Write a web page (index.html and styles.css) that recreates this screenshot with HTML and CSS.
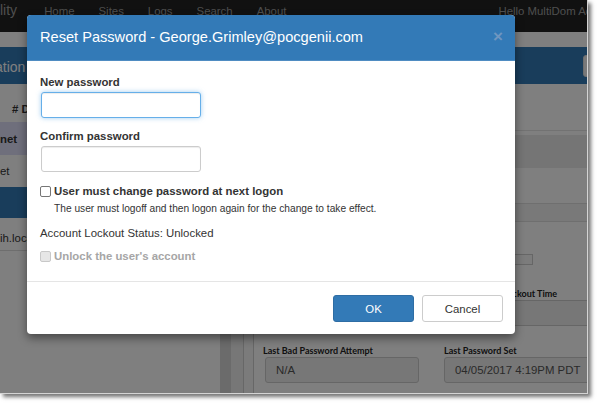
FILE: index.html
```html
<!DOCTYPE html>
<html lang="en">
<head>
<meta charset="utf-8">
<title>Reset Password</title>
<link rel="stylesheet" href="styles.css">
</head>
<body>
<div class="screen">
  <div class="app">
    <nav class="navbar">
      <span class="brand">lity</span>
      <a class="nav-link">Home</a>
      <a class="nav-link">Sites</a>
      <a class="nav-link">Logs</a>
      <a class="nav-link">Search</a>
      <a class="nav-link">About</a>
      <span class="hello">Hello MultiDom Admin</span>
    </nav>
    <div class="subbar"></div>
    <div class="band">
      <span class="band-title">ation</span>
      <span class="band-btn"></span>
    </div>
    <div class="main">
      <div class="list">
        <div class="list-head"># Domain</div>
        <div class="row row-hover">net</div>
        <div class="row row-plain">et</div>
        <div class="row row-active"></div>
        <div class="row row-last">ih.local</div>
      </div>
      <div class="stripe stripe-a"></div>
      <div class="stripe stripe-b"></div>
      <div class="stripe stripe-c"></div>
      <div class="panel">
        <div class="panel-top"></div>
        <div class="panel-band"></div>
        <div class="panel-sec"></div>
        <div class="panel-sub"></div>
        <div class="grid3 grid-small">
          <div></div><div></div><div class="mini-box"></div>
        </div>
        <div class="grid3 grid-lock">
          <div></div><div></div>
          <div class="field"><span class="flabel">Lockout Time</span><div class="fbox"></div></div>
        </div>
        <div class="grid2">
          <div class="field"><span class="flabel">Last Bad Password Attempt</span><div class="fbox fbox-a">N/A</div></div>
          <div class="field"><span class="flabel">Last Password Set</span><div class="fbox">04/05/2017 4:19PM PDT</div></div>
        </div>
      </div>
    </div>
  </div>

  <div class="backdrop"></div>

  <div class="modal">
    <div class="modal-header">
      <h4 class="modal-title">Reset Password - George.Grimley@pocgenii.com</h4>
      <span class="close">×</span>
    </div>
    <div class="modal-body">
      <div class="form-group">
        <label class="label">New password</label>
        <input class="input input-focus" type="password">
      </div>
      <div class="form-group">
        <label class="label">Confirm password</label>
        <input class="input" type="password">
      </div>
      <div class="check">
        <label class="check-label"><input type="checkbox" class="box">User must change password at next logon</label>
        <p class="help">The user must logoff and then logon again for the change to take effect.</p>
      </div>
      <p class="status">Account Lockout Status: Unlocked</p>
      <label class="check-label check-disabled"><input type="checkbox" class="box" disabled>Unlock the user's account</label>
    </div>
    <div class="modal-footer">
      <button class="btn btn-primary">OK</button>
      <button class="btn btn-default">Cancel</button>
    </div>
  </div>
</div>
</body>
</html>
```

FILE: styles.css
```css
html, body {
  margin: 0;
  padding: 0;
  background: #ffffff;
}

body {
  font-family: "Liberation Sans", Arial, sans-serif;
  width: 600px;
  height: 407px;
  overflow: hidden;
}

.screen {
  position: relative;
  width: 587px;
  height: 393px;
  overflow: hidden;
  border-right: 1px solid #d4d4d4;
  border-bottom: 1px solid #d4d4d4;
  box-shadow: 3px 3px 4px rgba(0, 0, 0, 0.55);
  background: #ffffff;
}

.app {
  width: 600px;
  height: 100%;
  display: flex;
  flex-direction: column;
  background: #ffffff;
}

/* navbar */
.navbar {
  display: flex;
  align-items: baseline;
  height: 32px;
  box-sizing: border-box;
  padding-top: 2px;
  background: #222222;
  color: #9d9d9d;
  font-size: 11.4px;
  line-height: 16px;
  white-space: nowrap;
  flex: none;
}

.brand {
  font-size: 14px;
  padding-right: 15px;
}

.nav-link {
  padding: 0 12px;
}

.hello {
  margin-left: 200px;
}

.subbar {
  height: 15px;
  flex: none;
  background: #ffffff;
}

.band {
  height: 37px;
  flex: none;
  box-sizing: border-box;
  padding: 10px 3px 0 0;
  display: flex;
  align-items: flex-start;
  background: #337ab7;
  color: #ffffff;
  font-size: 14px;
  line-height: 20px;
}

.band-title {
  margin-left: -5px;
}

.band-btn {
  margin-left: auto;
  margin-top: -2px;
  width: 14px;
  height: 22px;
  border-radius: 3px;
  background: #f2f2f2;
  border: 1px solid #dddddd;
  box-sizing: border-box;
}

.main {
  flex: 1;
  display: flex;
}

/* left list */
.list {
  width: 220px;
  flex: none;
  font-size: 11.4px;
  color: #333333;
}

.list-head {
  margin-top: 12px;
  height: 26px;
  line-height: 26px;
  padding-left: 12px;
  font-weight: bold;
  white-space: nowrap;
}

.row {
  display: flex;
  align-items: center;
  white-space: nowrap;
}

.row-hover {
  height: 33px;
  background: #dedef8;
  font-weight: bold;
}

.row-plain {
  height: 32px;
}

.row-active {
  height: 31px;
  background: #337ab7;
}

.row-last {
  height: 33px;
  padding-top: 8px;
  box-sizing: border-box;
  border-bottom: 1px solid #dddddd;
}

.stripe {
  flex: none;
}

.stripe-a {
  width: 11px;
  background: #d6d6d6;
}

.stripe-b {
  width: 12px;
  background: #eeeeee;
  border-right: 1px solid #cfcfcf;
}

.stripe-c {
  width: 9px;
  background: #f6f6f6;
}

/* right panel */
.panel {
  flex: 1;
  border-left: 1px solid #cfcfcf;
  display: flex;
  flex-direction: column;
}

.panel-top {
  height: 46px;
  border-bottom: 1px solid #e4e4e4;
}

.panel-band {
  margin-top: 4px;
  height: 33px;
  background: #eaeaea;
}

.panel-sec {
  height: 35px;
  border-bottom: 1px solid #dedede;
}

.panel-sub {
  height: 17px;
  background: #f2f2f2;
  border-bottom: 1px solid #dedede;
}

.grid3 {
  display: grid;
  grid-template-columns: 100px 100px 1fr;
  column-gap: 20px;
  padding-left: 9px;
}

.grid-small {
  margin-top: 32px;
}

.mini-box {
  width: 30px;
  height: 11px;
  box-sizing: border-box;
  border: 1px solid #cccccc;
  background: #f8f8f8;
}

.grid-lock {
  margin-top: 23px;
}

.grid2 {
  display: grid;
  grid-template-columns: 156px 156px;
  column-gap: 25px;
  padding-left: 9px;
  margin-top: 19px;
}

.field {
  display: flex;
  flex-direction: column;
}

.flabel {
  font-family: Lato, "Liberation Sans", sans-serif;
  font-weight: bold;
  font-size: 9px;
  line-height: 11px;
  color: #222222;
  margin-bottom: 1px;
  white-space: nowrap;
}

.fbox {
  height: 26px;
  box-sizing: border-box;
  border: 1px solid #cccccc;
  border-radius: 3px;
  background: #eeeeee;
  color: #555555;
  font-size: 11.4px;
  display: flex;
  align-items: center;
  padding-left: 10px;
  white-space: nowrap;
}

.fbox-a {
  margin-left: 2px;
}

/* overlay */
.backdrop {
  position: absolute;
  inset: 0;
  background: rgba(0, 0, 0, 0.5);
}

/* modal */
.modal {
  position: absolute;
  left: 27px;
  top: 15px;
  width: 488px;
  background: #ffffff;
  border-radius: 4px;
  overflow: hidden;
  box-shadow: 0 4px 10px rgba(0, 0, 0, 0.45);
  color: #333333;
  font-size: 11.4px;
}

.modal-header {
  display: flex;
  align-items: center;
  justify-content: space-between;
  padding: 12px 12px 12px 13px;
  background: #337ab7;
  border-bottom: 1px solid #4f8cc2;
  color: #ffffff;
}

.modal-title {
  margin: 0;
  font-size: 14.6px;
  font-weight: normal;
  line-height: 21px;
}

.close {
  font-size: 17px;
  font-weight: bold;
  line-height: 1;
  color: #6f96c0;
  margin-top: -3px;
}

.modal-body {
  padding: 14px 13px 17px 13px;
}

.form-group {
  margin-bottom: 11px;
}

.label {
  display: block;
  font-weight: bold;
  line-height: 15px;
  margin-bottom: 2px;
}

.input {
  display: block;
  width: 160px;
  height: 26px;
  box-sizing: border-box;
  margin: 0 0 0 1px;
  border: 1px solid #cccccc;
  border-radius: 3px;
  background: #ffffff;
  box-shadow: inset 0 1px 1px rgba(0, 0, 0, 0.075);
  padding: 0 8px;
  font: inherit;
}

.input-focus {
  border-color: #66afe9;
  box-shadow: inset 0 1px 1px rgba(0, 0, 0, 0.075), 0 0 5px rgba(102, 175, 233, 0.6);
  outline: none;
}

.check {
  margin-top: 1px;
}

.check-label {
  display: flex;
  align-items: center;
  font-weight: bold;
  line-height: 16px;
}

.box {
  appearance: none;
  -webkit-appearance: none;
  width: 11px;
  height: 11px;
  margin: 0 3px 0 0;
  box-sizing: border-box;
  border: 1px solid #767676;
  border-radius: 2px;
  background: #ffffff;
  flex: none;
}

.help {
  margin: 1px 0 0 14px;
  font-size: 10.2px;
  line-height: 17px;
}

.status {
  margin: 8px 0 0 0;
  line-height: 16px;
}

.check-disabled {
  margin-top: 7px;
  color: #a6a6a6;
}

.check-disabled .box {
  border-color: #c8c8c8;
  background: #e6e6e6;
}

.modal-footer {
  display: flex;
  justify-content: flex-end;
  gap: 8px;
  padding: 13px 12px 12px 12px;
  border-top: 1px solid #e5e5e5;
}

.btn {
  width: 81px;
  height: 27px;
  box-sizing: border-box;
  border-radius: 3px;
  font-family: "Liberation Sans", Arial, sans-serif;
  font-size: 11.4px;
  padding: 0;
}

.btn-primary {
  background: #337ab7;
  border: 1px solid #2e6da4;
  color: #ffffff;
}

.btn-default {
  background: #ffffff;
  border: 1px solid #cccccc;
  color: #333333;
}
```
